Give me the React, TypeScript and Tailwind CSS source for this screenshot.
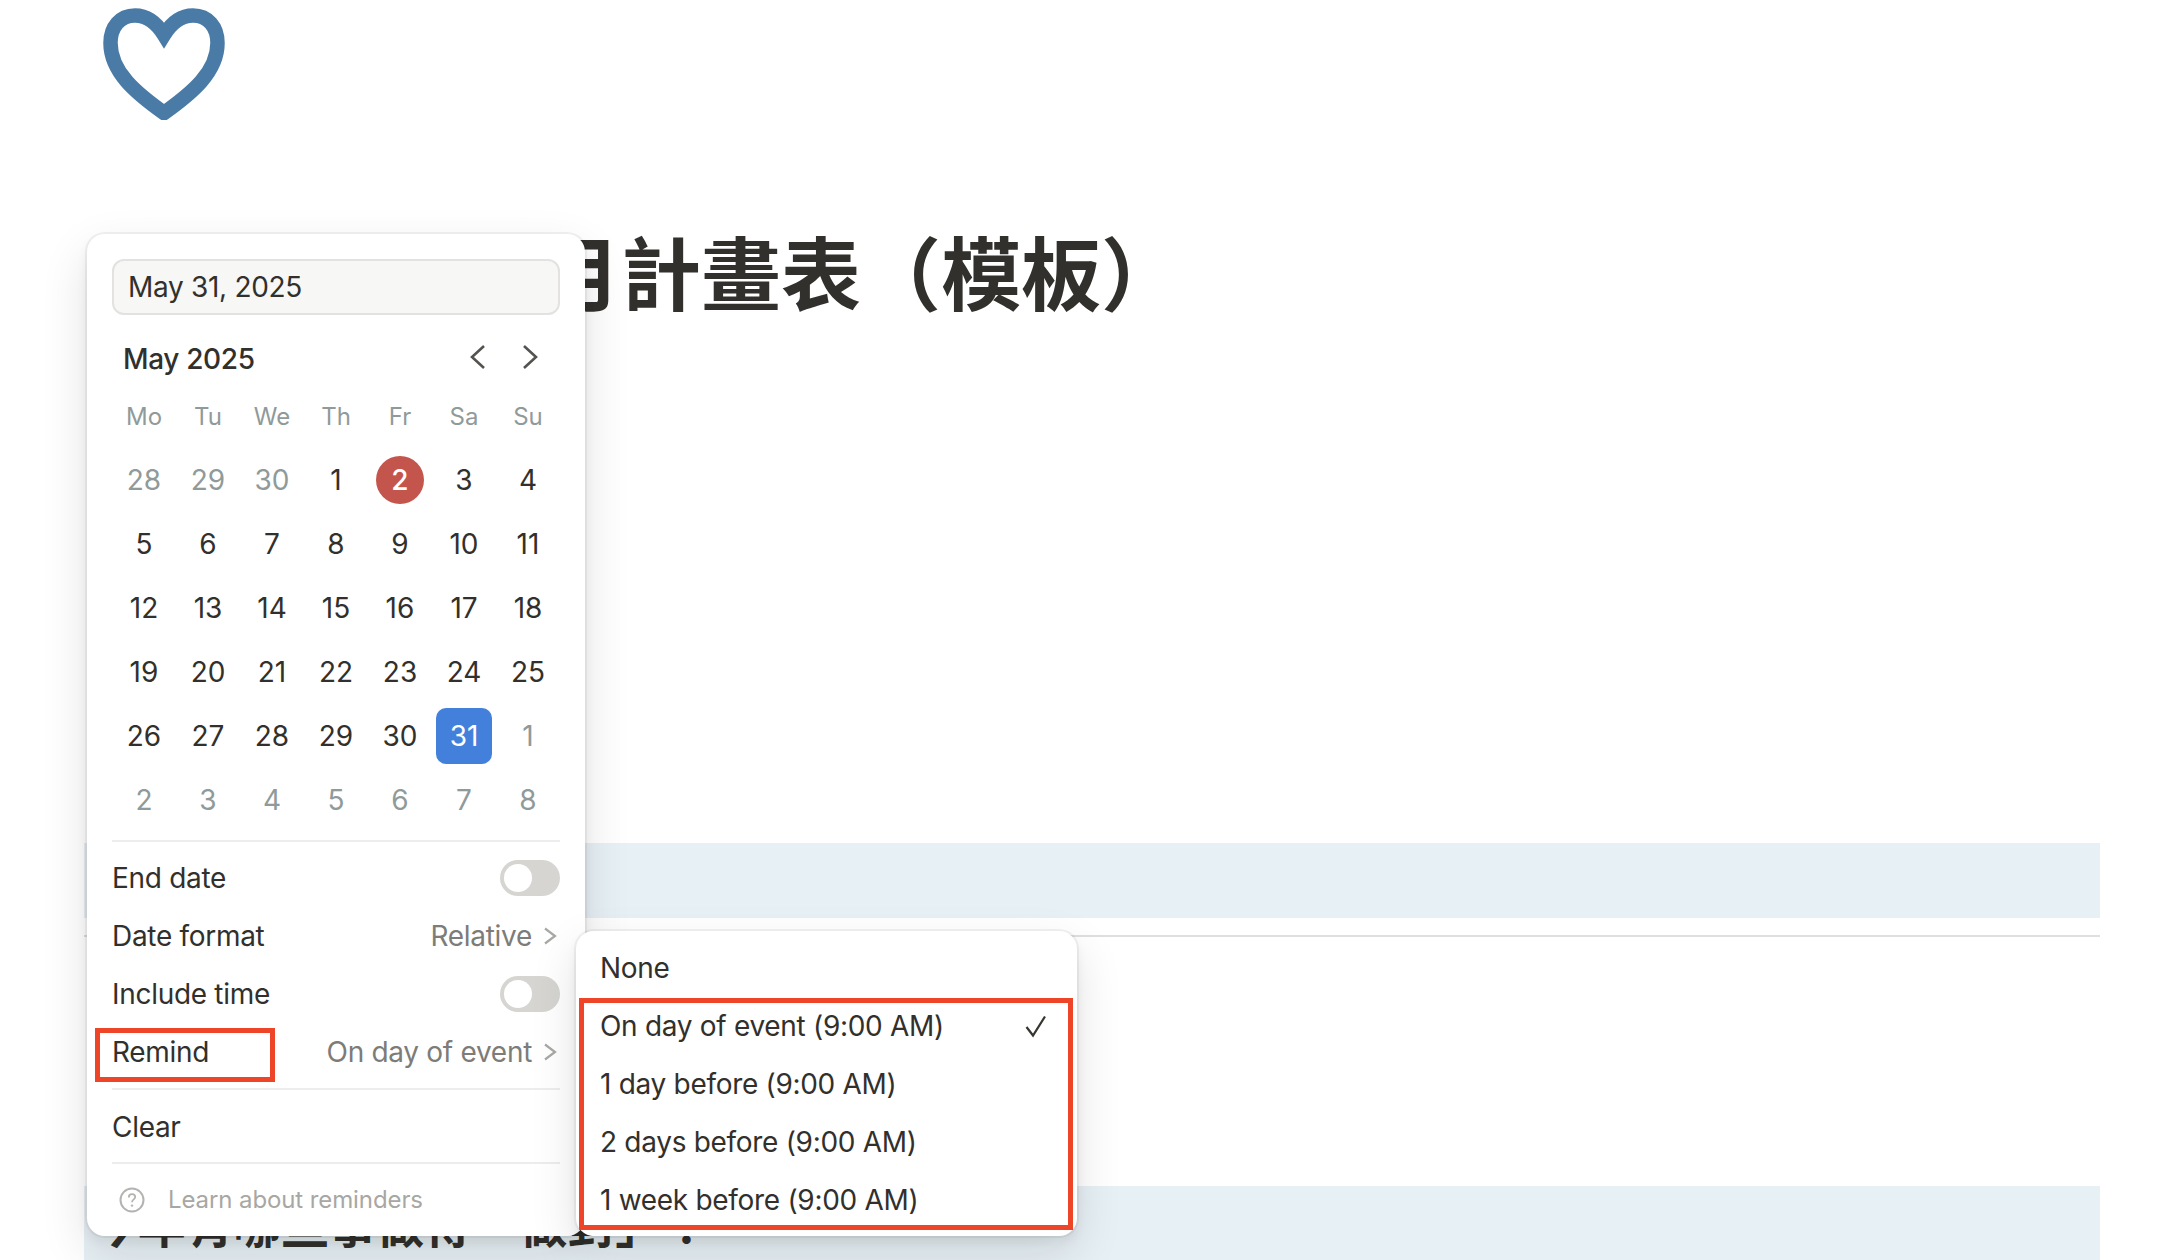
import React from "react";

const dark = "text-[#32302c]";
const weeks: [string, number][][] = [
  [["28", 0], ["29", 0], ["30", 0], ["1", 1], ["2", 2], ["3", 1], ["4", 1]],
  [["5", 1], ["6", 1], ["7", 1], ["8", 1], ["9", 1], ["10", 1], ["11", 1]],
  [["12", 1], ["13", 1], ["14", 1], ["15", 1], ["16", 1], ["17", 1], ["18", 1]],
  [["19", 1], ["20", 1], ["21", 1], ["22", 1], ["23", 1], ["24", 1], ["25", 1]],
  [["26", 1], ["27", 1], ["28", 1], ["29", 1], ["30", 1], ["31", 3], ["1", 0]],
  [["2", 0], ["3", 0], ["4", 0], ["5", 0], ["6", 0], ["7", 0], ["8", 0]],
];

function Toggle() {
  return (
    <div className="flex h-[36px] w-[60px] items-center rounded-full bg-[#d6d5d1] pl-[4px]">
      <div className="h-[28px] w-[28px] rounded-full bg-white" />
    </div>
  );
}

function Chevron() {
  return (
    <svg width="16" height="24" viewBox="0 0 16 24" fill="none" className="ml-[10px]">
      <path d="M3 4.5 L13 12 L3 19.5" stroke="#a9a8a5" strokeWidth="2.2" />
    </svg>
  );
}

function Row({ label, children }: { label: string; children?: React.ReactNode }) {
  return (
    <div className={`flex h-[58px] items-center justify-between text-[28px] tracking-[-0.3px] ${dark}`}>
      <span>{label}</span>
      {children}
    </div>
  );
}

function Value({ text }: { text: string }) {
  return (
    <div className="flex items-center pr-[2px] text-[#7d7c78]">
      <span>{text}</span>
      <Chevron />
    </div>
  );
}

function Day({ text, kind }: { text: string; kind: number }) {
  return (
    <div className="flex h-[64px] w-[64px] items-center justify-center">
      {kind === 2 ? (
        <div className="flex h-[48px] w-[48px] items-center justify-center rounded-full bg-[#c4554d] font-medium text-white">{text}</div>
      ) : kind === 3 ? (
        <div className="flex h-[56px] w-[56px] items-center justify-center rounded-[10px] bg-[#4380dc] text-white">{text}</div>
      ) : (
        <span className={kind === 0 ? "text-[#8f9a9a]" : dark}>{text}</span>
      )}
    </div>
  );
}

export default function App() {
  return (
    <div className="relative h-[1260px] w-[2178px] overflow-hidden bg-white font-['Inter','Noto_Sans_CJK_TC',sans-serif]">
      {/* page */}
      <div className="pl-[84px] pr-[78px]">
        <div className="h-[234px] pl-[16px]">
          <svg width="128" height="120" viewBox="0 0 128 120" fill="none">
            <path
              d="M64 35 C56 22 46 15.5 35 15.5 C20 15.5 10.5 27 10.5 43 C10.5 72 36 93 64 113 C92 93 117.5 72 117.5 43 C117.5 27 108 15.5 93 15.5 C82 15.5 72 22 64 35 Z"
              stroke="#4a7ba6"
              strokeWidth="14.5"
              strokeLinejoin="miter"
              strokeMiterlimit="6"
            />
          </svg>
        </div>
        <h1 className={`ml-[377px] mt-[-5px] h-[614px] text-[80px] font-bold leading-[92px] ${dark}`}>每月計畫表（模板）</h1>
        <div className="h-[75px] bg-[#e7f0f5]" />
        <div className="mt-[17px] h-[2px] bg-[#dfdfdd]" />
        <div className={`mt-[249px] h-[80px] bg-[#e7f0f5] pl-[6px] pt-[8px] text-[48px] font-bold leading-[64px] tracking-[-0.25px] ${dark}`}>今年有哪些事做得「做對」？</div>
      </div>

      {/* date picker */}
      <div className="absolute left-[87px] top-[234px] h-[1002px] w-[498px] rounded-[18px] bg-white px-[25px] shadow-[0_0_0_2px_rgba(15,15,15,0.05),0_6px_12px_rgba(15,15,15,0.06),0_18px_48px_rgba(15,15,15,0.12)]">
        <div className={`mt-[25px] flex h-[56px] items-center rounded-[12px] border-2 border-[#e3e2e0] bg-[#f7f7f5] pl-[14px] text-[28px] tracking-[-0.3px] ${dark}`}>May 31, 2025</div>
        <div className="mt-[14px] flex h-[60px] items-center justify-between pl-[11px] pr-[20px]">
          <span className={`text-[28px] font-medium tracking-[-0.35px] ${dark}`}>May 2025</span>
          <div className="flex gap-[32px] pb-[4px]">
            <svg width="20" height="28" viewBox="0 0 20 28" fill="none"><path d="M16 3 L4 14 L16 25" stroke="#55534f" strokeWidth="2.6" /></svg>
            <svg width="20" height="28" viewBox="0 0 20 28" fill="none"><path d="M4 3 L16 14 L4 25" stroke="#55534f" strokeWidth="2.6" /></svg>
          </div>
        </div>
        <div className="grid h-[59px] grid-cols-7 items-center pb-[3px] text-center text-[24px] text-[#8f9a9a]">
          {["Mo", "Tu", "We", "Th", "Fr", "Sa", "Su"].map((d) => (
            <span key={d}>{d}</span>
          ))}
        </div>
        <div className="grid grid-cols-7 text-[28px]">
          {weeks.flat().map(([t, k], i) => (
            <Day key={i} text={t} kind={k} />
          ))}
        </div>
        <div className="mt-[8px] h-[2px] bg-[#ededec]" />
        <div className="mt-[7px]">
          <Row label="End date"><Toggle /></Row>
          <Row label="Date format"><Value text="Relative" /></Row>
          <Row label="Include time"><Toggle /></Row>
          <Row label="Remind"><Value text="On day of event" /></Row>
        </div>
        <div className="mt-[7px] h-[2px] bg-[#ededec]" />
        <div className="mt-[8px]"><Row label="Clear" /></div>
        <div className="mt-[6px] h-[2px] bg-[#ededec]" />
        <div className="mt-[8px] flex h-[56px] items-center pl-[7px] text-[24px] tracking-[-0.1px] text-[#a8a7a3]">
          <svg width="26" height="26" viewBox="0 0 26 26" fill="none">
            <circle cx="13" cy="13" r="11.5" stroke="#b4b3af" strokeWidth="2" />
            <path d="M9.8 10.4 C9.8 8.4 11.2 7.2 13 7.2 C14.8 7.2 16.2 8.4 16.2 10.1 C16.2 12.4 13 12.4 13 15.2" stroke="#b4b3af" strokeWidth="1.8" />
            <circle cx="13" cy="18.6" r="1.2" fill="#b4b3af" />
          </svg>
          <span className="ml-[23px]">Learn about reminders</span>
        </div>
      </div>

      {/* remind submenu */}
      <div className={`absolute left-[576px] top-[931px] h-[305px] w-[501px] rounded-[18px] bg-white pl-[24px] pt-[8px] text-[28px] tracking-[-0.3px] shadow-[0_0_0_2px_rgba(15,15,15,0.05),0_6px_12px_rgba(15,15,15,0.06),0_18px_48px_rgba(15,15,15,0.12)] ${dark}`}>
        <div className="flex h-[58px] items-center">None</div>
        <div className="flex h-[58px] items-center justify-between pr-[29px]">
          <span>On day of event (9:00 AM)</span>
          <svg width="24" height="24" viewBox="0 0 24 24" fill="none"><path d="M2.5 13 L9 21.5 L21 2.5" stroke="#37352f" strokeWidth="2.2" /></svg>
        </div>
        <div className="flex h-[58px] items-center">1 day before (9:00 AM)</div>
        <div className="flex h-[58px] items-center">2 days before (9:00 AM)</div>
        <div className="flex h-[58px] items-center">1 week before (9:00 AM)</div>
      </div>

      {/* annotations */}
      <div className="absolute left-[95px] top-[1028px] h-[54px] w-[180px] border-[5px] border-[#ee4528]" />
      <div className="absolute left-[579px] top-[998px] h-[232px] w-[494px] border-[5px] border-[#ee4528]" />
    </div>
  );
}
